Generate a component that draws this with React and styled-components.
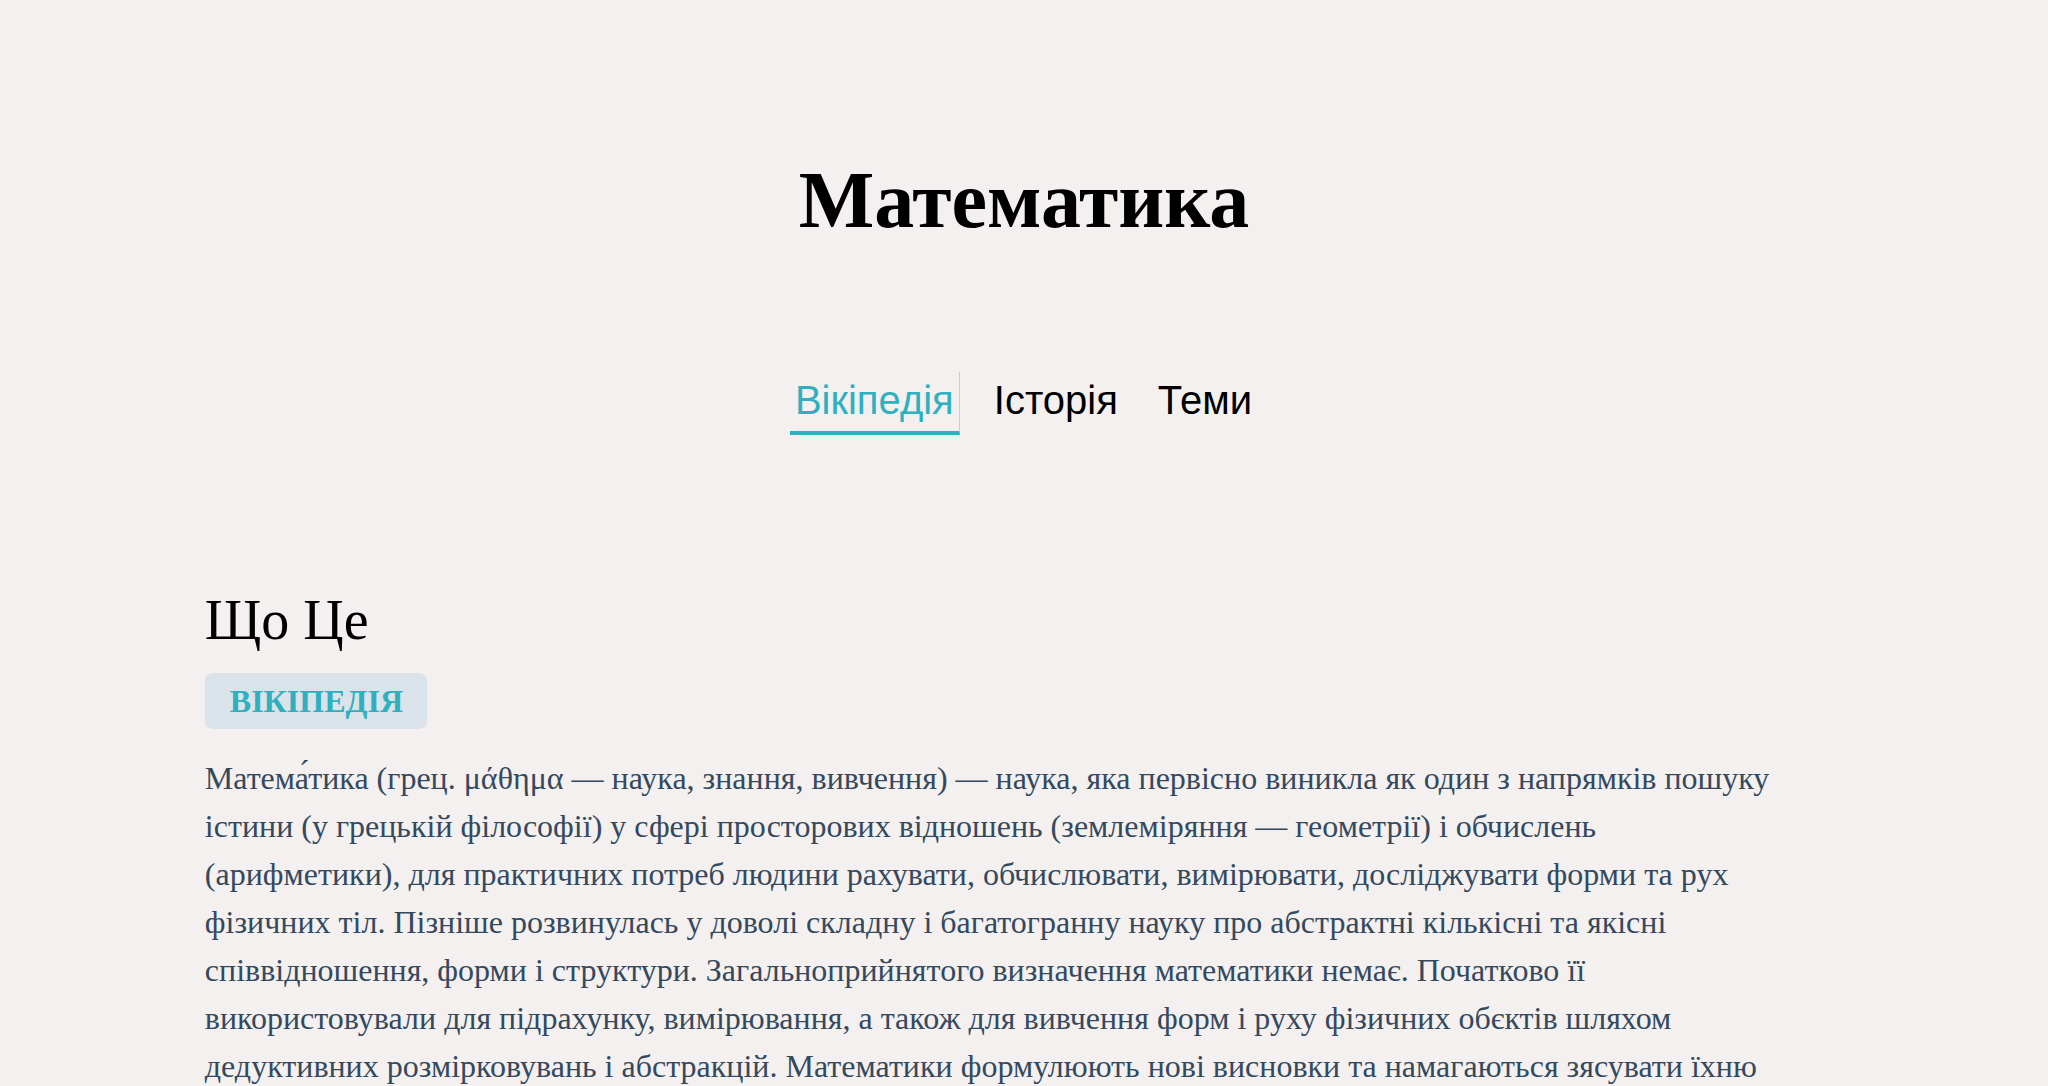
import React, { useState } from 'react'
import styled, { createGlobalStyle } from 'styled-components'

const GlobalStyle = createGlobalStyle`
  body {
    margin: 0;
    background: #f3f0ef;
    font-family: "Liberation Serif", "Times New Roman", serif;
  }
`

const Page = styled.div`
  min-height: 100vh;
`

const Header = styled.header`
  display: flex;
  flex-direction: column;
  align-items: center;
  padding-top: 152px;
`

const Title = styled.h1`
  margin: 0;
  font-size: 80px;
  line-height: 1.2;
  font-weight: bold;
  color: #000;
`

const Tabs = styled.nav`
  display: flex;
  justify-content: center;
  gap: 29px;
  margin-top: 124px;
`

const Tab = styled.button`
  padding: 6px 5px 8px;
  background: none;
  border: none;
  border-bottom: 4px solid ${p => (p.$active ? '#2fb0bf' : 'transparent')};
  border-right: 1px solid ${p => (p.$active ? '#a6dbe1' : 'transparent')};
  font-family: "Liberation Sans", Arial, sans-serif;
  font-size: 40px;
  color: ${p => (p.$active ? '#2fb0bf' : '#000')};
  cursor: pointer;
`

const Content = styled.main`
  width: 80%;
  margin: 152px auto 0;
`

const Heading = styled.h2`
  margin: 0;
  font-size: 56px;
  line-height: 1.2;
  font-weight: normal;
  color: #000;
`

const Badge = styled.span`
  display: inline-block;
  margin-top: 19px;
  padding: 10px 24px 9px 25px;
  background: #dae2ea;
  border-radius: 8px;
  font-size: 32px;
  font-weight: bold;
  text-transform: uppercase;
  color: #2fb0bf;
`

const Text = styled.p`
  max-width: 1580px;
  margin: 25px 0 0;
  font-size: 32px;
  line-height: 48px;
  color: #34495e;
`

const tabs = ['Вікіпедія', 'Історія', 'Теми']

const App = () => {
  const [active, setActive] = useState(0)

  return (
    <Page>
      <GlobalStyle />
      <Header>
        <Title>Математика</Title>
        <Tabs>
          {tabs.map((t, i) => (
            <Tab key={t} $active={i === active} onClick={() => setActive(i)}>
              {t}
            </Tab>
          ))}
        </Tabs>
      </Header>
      <Content>
        <Heading>Що Це</Heading>
        <Badge>Вікіпедія</Badge>
        <Text>
          Матема́тика (грец. μάθημα — наука, знання, вивчення) — наука, яка первісно виникла як один з
          напрямків пошуку істини (у грецькій філософії) у сфері просторових відношень (землеміряння —
          геометрії) і обчислень (арифметики), для практичних потреб людини рахувати, обчислювати,
          вимірювати, досліджувати форми та рух фізичних тіл. Пізніше розвинулась у доволі складну і
          багатогранну науку про абстрактні кількісні та якісні співвідношення, форми і структури.
          Загальноприйнятого визначення математики немає. Початково її використовували для підрахунку,
          вимірювання, а також для вивчення форм і руху фізичних обєктів шляхом дедуктивних розмірковувань
          і абстракцій. Математики формулюють нові висновки та намагаються зясувати їхню істинність
          (або хибність) шляхом математичного доведення.
        </Text>
      </Content>
    </Page>
  )
}

export default App
